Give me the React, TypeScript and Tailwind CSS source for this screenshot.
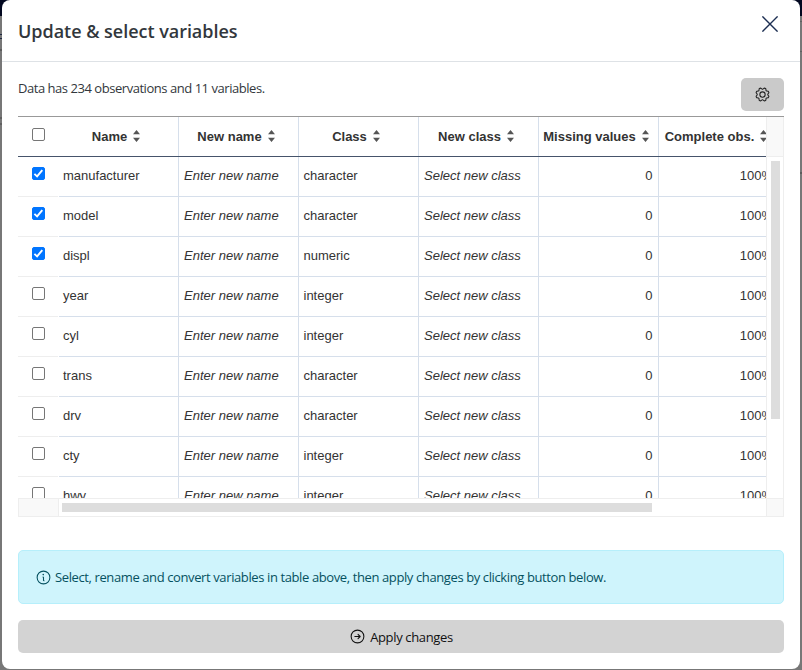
import React from "react";
import { PiGear, PiInfo, PiArrowCircleRight } from "react-icons/pi";

const rows = [
  { name: "manufacturer", cls: "character", checked: true },
  { name: "model", cls: "character", checked: true },
  { name: "displ", cls: "numeric", checked: true },
  { name: "year", cls: "integer", checked: false },
  { name: "cyl", cls: "integer", checked: false },
  { name: "trans", cls: "character", checked: false },
  { name: "drv", cls: "character", checked: false },
  { name: "cty", cls: "integer", checked: false },
  { name: "hwy", cls: "integer", checked: false },
];

const columns = ["Name", "New name", "Class", "New class", "Missing values", "Complete obs."];

const cell = "flex w-[120px] shrink-0 items-center border-b border-r border-[#d6dfeb] pb-0.5";

function Checkbox({ checked }: { checked: boolean }) {
  return (
    <span
      role="checkbox"
      aria-checked={checked}
      className={`block h-[13px] w-[13px] rounded-[2px] border ${checked ? "border-[#0075ff] bg-[#0075ff]" : "border-[#767676] bg-white"}`}
    >
      {checked && (
        <svg viewBox="0 0 11 11" className="block h-[11px] w-[11px]" fill="none" stroke="#fff" strokeWidth="1.9">
          <path d="M1.4 5.9 4.1 8.4 9.3 2.1" />
        </svg>
      )}
    </span>
  );
}

function SortIcon() {
  return (
    <svg viewBox="0 0 7 12" className="h-[12px] w-[7px] shrink-0" fill="#555">
      <path d="M0 4.2 3.5 0 7 4.2zM0 7.8h7L3.5 12z" />
    </svg>
  );
}

export default function App() {
  return (
    <div className="relative h-[670px] w-[802px] overflow-hidden bg-[#777] font-['Open_Sans',sans-serif] text-[#32373c]">
      <div className="absolute inset-x-0 top-0 h-4 bg-[#020820]" />
      <div className="absolute left-0 top-[34px] h-[5px] w-0.5 border-y border-[#1d2740]" />
      <div className="absolute left-0 top-[49px] h-0.5 w-0.5 bg-[#5c5c5c]" />
      <div className="absolute left-0 top-[117px] h-[8px] w-0.5 border-y-2 border-[#606060]" />
      <div className="absolute right-0 top-[21px] h-px w-0.5 bg-[#606060]" />
      <div className="absolute right-0 top-[51px] h-px w-0.5 bg-[#606060]" />
      <div className="absolute right-0 top-[172px] h-0.5 w-0.5 bg-[#5c5c5c]" />

      <section className="relative mx-auto flex h-[669px] w-[798px] flex-col rounded-lg bg-white">
        <header className="flex h-[62px] shrink-0 justify-between border-b border-[#dee2e6] pl-4 pr-[22px]">
          <h1 className="mt-[17px] whitespace-nowrap text-[18px] font-semibold leading-[28px] tracking-[-0.03px]">Update &amp; select variables</h1>
          <svg viewBox="0 0 16 16" className="mt-4 h-4 w-4" stroke="#1c2e52" strokeWidth="1.4" fill="none">
            <path d="M.4.4 15.6 15.6M15.6.4.4 15.6" />
          </svg>
        </header>

        <div className="flex h-[54px] shrink-0 justify-between px-4">
          <p className="mt-4 whitespace-nowrap text-[13px] leading-5 tracking-[-0.46px]">Data has 234 observations and 11 variables.</p>
          <button className="mt-4 flex h-[33px] w-[43px] items-center justify-center rounded-[5px] bg-[#cacaca] text-[#222]">
            <PiGear size={17} />
          </button>
        </div>

        <div className="mx-4 flex h-[401px] shrink-0 flex-col border-t border-[#999] font-['Liberation_Sans',Arial,sans-serif] text-[13px] text-[#333]">
          <div className="flex h-[40px] shrink-0">
            <div className="flex h-full w-[748px] overflow-hidden border-b border-[#46546b] font-bold">
              <div className="w-[41px] shrink-0 pl-[14px] pt-[11px]"><Checkbox checked={false} /></div>
              {columns.map((c) => (
                <div key={c} className="flex w-[120px] shrink-0 items-center justify-center gap-1.5 whitespace-nowrap border-r border-[#d6dfeb] pb-0.5 pr-[5px]">
                  <span className="pt-0.5">{c}</span><SortIcon />
                </div>
              ))}
            </div>
            <div className="w-[18px] border-x border-b border-[#eee] bg-[#f9f9f9]" />
          </div>

          <div className="flex h-[341px] shrink-0 overflow-hidden">
            <div className="w-[748px] overflow-hidden">
              {rows.map((r) => (
                <div key={r.name} className="flex h-10 w-[761px]">
                  <div className="mr-px w-10 shrink-0 border-b border-[#eee] pl-[14px] pt-[10px]"><Checkbox checked={r.checked} /></div>
                  <div className={`${cell} pl-1`}>{r.name}</div>
                  <div className={`${cell} pl-[5px] italic`}>Enter new name</div>
                  <div className={`${cell} pl-[4.5px]`}>{r.cls}</div>
                  <div className={`${cell} pl-[5px] italic`}>Select new class</div>
                  <div className={`${cell} justify-end pr-[5.5px]`}>0</div>
                  <div className={`${cell} justify-end pr-[5px]`}>100%</div>
                </div>
              ))}
            </div>
            <div className="w-[18px] border-x border-[#eee] pl-1 pt-1">
              <div className="h-[258px] w-[9px] bg-[#ddd]" />
            </div>
          </div>

          <div className="flex h-[19px] shrink-0 border border-[#eee]">
            <div className="w-10 border-r border-[#eee] bg-[#f9f9f9]" />
            <div className="flex-1 pl-[3px] pt-1"><div className="h-[9px] w-[590px] bg-[#ddd]" /></div>
            <div className="w-[17px] border-l border-[#eee] bg-[#f9f9f9]" />
          </div>
        </div>

        <div className="mx-4 mt-[33px] flex h-[54px] shrink-0 items-center rounded-[5px] border border-[#b6effb] bg-[#cff4fc] pl-4 text-[#055160]">
          <PiInfo size={17} className="shrink-0" />
          <span className="ml-[3px] whitespace-nowrap pt-0.5 text-[13px] tracking-[-0.39px]">Select, rename and convert variables in table above, then apply changes by clicking button below.</span>
        </div>

        <button className="mx-4 mt-4 flex h-[33px] shrink-0 items-center justify-center rounded-[5px] bg-[#d3d3d3] text-[#111]">
          <PiArrowCircleRight size={17} />
          <span className="ml-1 whitespace-nowrap pt-0.5 text-[13px] tracking-[-0.35px]">Apply changes</span>
        </button>
      </section>
    </div>
  );
}
